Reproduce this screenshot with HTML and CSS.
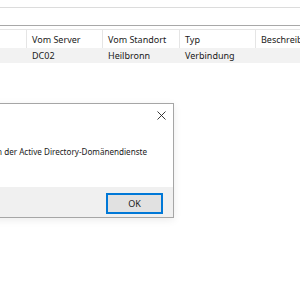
FILE: index.html
```html
<!DOCTYPE html>
<html lang="de">
<head>
<meta charset="utf-8">
<link rel="stylesheet" href="styles.css">
</head>
<body>
<div class="screen">
  <div class="top-gap"></div>
  <div class="searchbox"></div>
  <div class="mid-gap"></div>
  <div class="list">
    <div class="lrow header">
      <div class="cell c0"></div>
      <div class="cell c1">Vom Server</div>
      <div class="cell c2">Vom Standort</div>
      <div class="cell c3">Typ</div>
      <div class="cell c4">Beschreibung</div>
    </div>
    <div class="lrow data">
      <div class="cell c0"></div>
      <div class="cell c1">DC02</div>
      <div class="cell c2">Heilbronn</div>
      <div class="cell c3">Verbindung</div>
      <div class="cell c4"></div>
    </div>
  </div>

  <div class="dialog">
    <div class="titlebar">
      <svg class="close" width="9" height="9" viewBox="0 0 9 9"><path d="M0.5 0.5L8.5 8.5M8.5 0.5L0.5 8.5" stroke="#222" stroke-width="0.9"/></svg>
    </div>
    <div class="body">
      <div class="msg">Fehler beim Zugriff auf die Dateien der Active Directory-Domänendienste</div>
    </div>
    <div class="footer">
      <button class="ok">OK</button>
    </div>
  </div>
</div>
</body>
</html>
```
FILE: styles.css
```css
html, body {
  margin: 0;
  padding: 0;
  background: #fff;
}
.screen {
  position: relative;
  width: 300px;
  height: 300px;
  overflow: hidden;
  font-family: "Noto Sans", "Open Sans", sans-serif;
  font-size: 9px;
  color: #1a1a1a;
}
.top-gap { height: 7px; }
.searchbox {
  height: 17px;
  border-top: 1px solid #dcdcdc;
  border-bottom: 1px solid #a8a8a8;
}
.mid-gap { height: 3px; }
.list {
  display: flex;
  flex-direction: column;
}
.lrow {
  display: flex;
  width: 320px;
}
.header {
  height: 18px;
  border-top: 1px solid #e5e5e5;
}
.data {
  height: 15px;
  background: #f2f2f2;
}
.cell {
  display: flex;
  align-items: center;
  padding-left: 5px;
  white-space: nowrap;
  overflow: hidden;
  box-sizing: border-box;
}
.header .cell { border-right: 1px solid #e5e5e5; }
.c0 { width: 27px; }
.c1 { width: 76px; }
.c2 { width: 77px; }
.c3 { width: 76px; }
.c4 { flex: 1; }

.dialog {
  position: absolute;
  left: -160px;
  top: 103px;
  width: 334px;
  height: 115px;
  box-sizing: border-box;
  border: 1px solid #a6a6a6;
  background: #fff;
  display: flex;
  flex-direction: column;
  box-shadow: 0 2px 8px rgba(0,0,0,0.08);
}
.titlebar {
  height: 23px;
  display: flex;
  justify-content: flex-end;
  align-items: center;
  padding-right: 7px;
}
.close { display: block; }
.body {
  flex: 1;
  display: flex;
  align-items: center;
  justify-content: flex-end;
  padding-right: 26px;
  padding-bottom: 11px;
  overflow: hidden;
}
.msg {
  white-space: nowrap;
  flex-shrink: 0;
  font-size: 8.1px;
}
.footer {
  height: 30px;
  background: #f0f0f0;
  display: flex;
  justify-content: flex-end;
  align-items: flex-start;
  padding: 6px 10px 0 0;
  box-sizing: border-box;
}
.ok {
  width: 57px;
  height: 21px;
  box-sizing: border-box;
  border: 2px solid #0078d7;
  background: #e1e1e1;
  font-family: inherit;
  font-size: 9px;
  color: #1a1a1a;
  padding: 0;
  box-shadow: inset 0 0 0 1px #e1e1e1;
}
```
